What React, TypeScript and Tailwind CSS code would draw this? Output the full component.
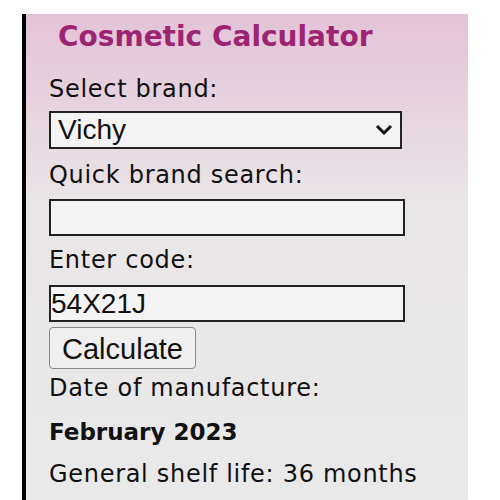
import { useState } from "react";

const label = "text-[24px] leading-[30px] tracking-[0.7px] text-[#111]";
const arial = { fontFamily: '"Liberation Sans", Arial, sans-serif' };

export default function App() {
  const [brand, setBrand] = useState("Vichy");
  const [search, setSearch] = useState("");
  const [code, setCode] = useState("54X21J");

  return (
    <div className="min-h-screen bg-white pt-[14px] pl-[22px]" style={{ fontFamily: '"DejaVu Sans", Verdana, sans-serif' }}>
      <div className="w-[446px] h-[486px] border-l-4 border-black bg-gradient-to-b from-[#e3c3d7] via-[#e9e6e8] via-40% to-[#e9e9e9] pl-[23px]">
        <h1 className="pl-[9px] pt-[5px] h-[60px] text-[28px] leading-[36px] font-bold text-[#9c2472]">
          Cosmetic Calculator
        </h1>

        <div className={label}>Select brand:</div>
        <div className="relative mt-[7px] w-[353px] h-[38px]">
          <select
            value={brand}
            onChange={(e) => setBrand(e.target.value)}
            className="w-full h-full appearance-none border-2 border-[#222] bg-[#f4f4f4] pl-[7px] py-0 text-[28px] leading-[30px] text-[#111] outline-none"
            style={arial}
          >
            <option>Vichy</option>
            <option>L'Oreal</option>
            <option>La Roche-Posay</option>
          </select>
          <svg className="absolute right-[8px] top-[13px] pointer-events-none" width="20" height="12" viewBox="0 0 20 12">
            <path d="M3 2 L10 9 L17 2" fill="none" stroke="#111" strokeWidth="3" />
          </svg>
        </div>

        <div className={`${label} mt-[11px]`}>Quick brand search:</div>
        <input
          value={search}
          onChange={(e) => setSearch(e.target.value)}
          className="block mt-[9px] w-[356px] h-[37px] border-2 border-[#222] bg-[#f4f4f4] outline-none"
        />

        <div className={`${label} mt-[9px]`}>Enter code:</div>
        <input
          value={code}
          onChange={(e) => setCode(e.target.value)}
          className="block mt-[10px] w-[356px] h-[37px] border-2 border-[#222] bg-[#f4f4f4] px-0 text-[28px] text-[#111] outline-none"
          style={arial}
        />

        <button
          className="block mt-[5px] w-[147px] h-[42px] rounded-[4px] border border-[#8a8a8a] bg-[#efefef] text-[29px] text-[#111]"
          style={arial}
        >
          Calculate
        </button>

        <div className={`${label} mt-[4px]`}>Date of manufacture:</div>
        <div className="mt-[14px] text-[23px] leading-[30px] font-bold text-[#111]">February 2023</div>
        <div className={`${label} mt-[12px]`}>General shelf life: 36 months</div>
      </div>
    </div>
  );
}
